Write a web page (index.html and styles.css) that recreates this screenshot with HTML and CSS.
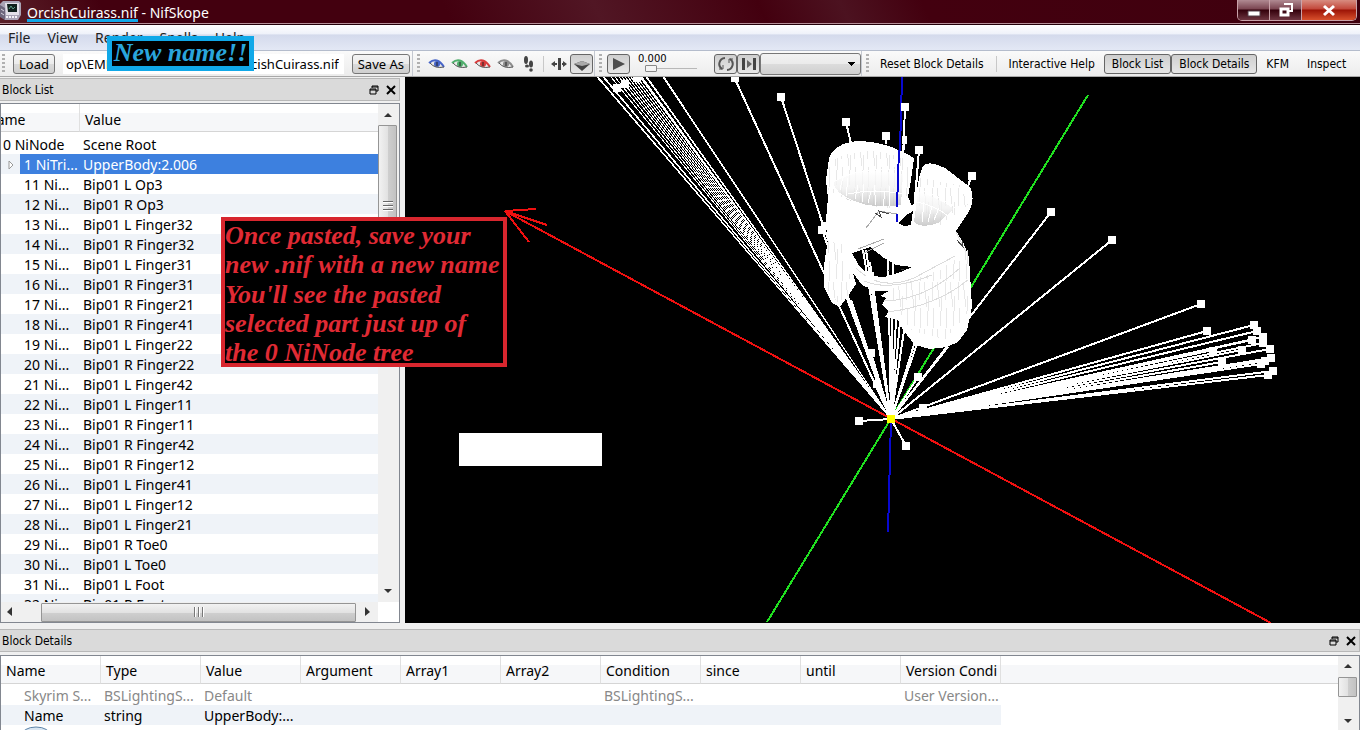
FILE: index.html
```html
<!DOCTYPE html>
<html lang="en">
<head>
    <meta charset="UTF-8">
    <title>OrcishCuirass.nif - NifSkope</title>
    <link rel="stylesheet" href="styles.css">
</head>
<body>
<div class="app">
    <!-- Title bar -->
    <header class="titlebar">
        <svg class="app-icon" width="22" height="22" viewBox="0 0 22 22">
            <path d="M0 4L3 1h16l2 2v12l-3 5H5l-5-4z" fill="#a9a3b5"/>
            <path d="M0 5l5 3v12l-5-3z" fill="#6d667c"/>
            <path d="M5 3h14v12H6z" fill="#e3e0e8"/>
            <path d="M7 4h10v8H8z" fill="#10201c"/>
            <path d="M9 9l2-3 2 3 2-2" stroke="#5fa08a" fill="none"/>
            <path d="M6 17h12" stroke="#f5f3f8" stroke-width="2" stroke-dasharray="2 1"/>
            <path d="M1 9l3 2M1 13l3 2" stroke="#d8d4e0"/>
        </svg>
        <h1 class="title"><span class="file-name">OrcishCuirass.nif</span> - NifSkope</h1>
        <div class="caption-buttons">
            <button class="caption" aria-label="Minimize">
                <svg width="14" height="14"><path d="M1 8h12v5H1z" fill="#fff" stroke="#54404a"/></svg>
            </button>
            <button class="caption" aria-label="Restore">
                <svg width="16" height="16"><path d="M6 2h8v7h-3" fill="none" stroke="#fff" stroke-width="2"/><path d="M3 7h7v6H3z" fill="none" stroke="#fff" stroke-width="3"/></svg>
            </button>
            <button class="caption close" aria-label="Close">
                <svg width="14" height="14"><path d="M2 3l10 9M12 3L2 12" stroke="#fff" stroke-width="3"/></svg>
            </button>
        </div>
    </header>

    <nav class="menubar">
        <a href="#">File</a>
        <a href="#">View</a>
        <a href="#">Render</a>
        <a href="#">Spells</a>
        <a href="#">Help</a>
    </nav>

    <!-- Toolbars -->
    <div class="toolbars">
        <div class="toolbar load-bar">
            <span class="grip"></span>
            <button class="push">Load</button>
            <input class="path" type="text" aria-label="File path" value="op\EMPTY FOLDER\armour\OrcishCuirass.nif">
            <button class="push">Save As</button>
        </div>
        <div class="toolbar view-bar">
            <span class="grip"></span>
            <button class="tool eye-blue" aria-label="Top view"><svg width="18" height="12"><use href="#eye"/></svg></button>
            <button class="tool eye-green" aria-label="Front view"><svg width="18" height="12"><use href="#eye"/></svg></button>
            <button class="tool eye-red" aria-label="Side view"><svg width="18" height="12"><use href="#eye"/></svg></button>
            <button class="tool eye-gray" aria-label="User view"><svg width="18" height="12"><use href="#eye"/></svg></button>
            <button class="tool" aria-label="Walk">
                <svg width="14" height="16" fill="#444"><ellipse cx="4" cy="4" rx="2" ry="4"/><ellipse cx="5" cy="10" rx="2" ry="1.6"/><ellipse cx="9" cy="8" rx="2" ry="3.5"/><ellipse cx="9" cy="14" rx="1.8" ry="1.8"/></svg>
            </button>
            <span class="separator"></span>
            <button class="tool flip" aria-label="Flip">
                <svg width="16" height="14"><path d="M7 1h3v12H7z" fill="#444"/><path d="M0 7l4-3v2h2v2H4v2zM16 7l-4-3v2h-1v2h1v2z" fill="#444"/></svg>
            </button>
            <button class="tool pressed" aria-label="Perspective">
                <svg width="16" height="14"><path d="M0 7l8-3 8 3-8 7z" fill="#444"/><path d="M0 7l8-3 8 3-8 2z" fill="#aaa"/></svg>
            </button>
        </div>
        <div class="toolbar anim-bar">
            <span class="grip"></span>
            <button class="tool pressed" aria-label="Play">
                <svg width="14" height="14"><path d="M1 1l12 6-12 6z" fill="#4d4d4d"/></svg>
            </button>
            <label class="time">0.000<input type="range" min="0" max="100" value="0"></label>
            <button class="tool pressed loop" aria-label="Loop">
                <svg width="16" height="16" fill="none" stroke="#555" stroke-width="2"><path d="M7 2a6 6 0 0 0-3 11M9 14a6 6 0 0 0 3-11"/><path d="M1 13h4v-4M15 3h-4v4" stroke-width="1"/></svg>
            </button>
            <button class="tool pressed" aria-label="Switch animation">
                <svg width="16" height="14"><path d="M1 1h3v12H1zM12 1h3v12h-3z" fill="#444"/><path d="M6 3l5 4-5 4z" fill="#666"/></svg>
            </button>
            <select class="combo" aria-label="Animation group"><option></option></select>
        </div>
        <div class="toolbar dock-bar">
            <span class="grip"></span>
            <button class="text-tool">Reset Block Details</button>
            <span class="separator"></span>
            <button class="text-tool">Interactive Help</button>
            <button class="text-tool pressed">Block List</button>
            <button class="text-tool pressed">Block Details</button>
            <button class="text-tool">KFM</button>
            <button class="text-tool">Inspect</button>
        </div>
    </div>

    <main class="workspace">
        <!-- Block list -->
        <section class="dock">
            <div class="dock-title">
                <h2>Block List</h2>
                <button aria-label="Float"><svg width="10" height="10"><use href="#float"/></svg></button>
                <button aria-label="Close"><svg width="10" height="10"><use href="#cross"/></svg></button>
            </div>
            <div class="tree-box">
                <div class="tree-main">
                    <div class="tree-scroll">
                        <table class="tree block-tree">
                            <thead><tr><th>Name</th><th>Value</th></tr></thead>
                            <tbody>
                                <tr><td class="root">0 NiNode</td><td>Scene Root</td></tr>
                                <tr class="selected"><td><svg class="expander" width="7" height="10"><path d="M1 1l4 4-4 4z" fill="#fff" stroke="#999"/></svg><span class="cell">1 NiTri...</span></td><td>UpperBody:2.006</td></tr>
                                <tr><td>11 Ni...</td><td>Bip01 L Op3</td></tr>
                                <tr><td>12 Ni...</td><td>Bip01 R Op3</td></tr>
                                <tr><td>13 Ni...</td><td>Bip01 L Finger32</td></tr>
                                <tr><td>14 Ni...</td><td>Bip01 R Finger32</td></tr>
                                <tr><td>15 Ni...</td><td>Bip01 L Finger31</td></tr>
                                <tr><td>16 Ni...</td><td>Bip01 R Finger31</td></tr>
                                <tr><td>17 Ni...</td><td>Bip01 R Finger21</td></tr>
                                <tr><td>18 Ni...</td><td>Bip01 R Finger41</td></tr>
                                <tr><td>19 Ni...</td><td>Bip01 L Finger22</td></tr>
                                <tr><td>20 Ni...</td><td>Bip01 R Finger22</td></tr>
                                <tr><td>21 Ni...</td><td>Bip01 L Finger42</td></tr>
                                <tr><td>22 Ni...</td><td>Bip01 L Finger11</td></tr>
                                <tr><td>23 Ni...</td><td>Bip01 R Finger11</td></tr>
                                <tr><td>24 Ni...</td><td>Bip01 R Finger42</td></tr>
                                <tr><td>25 Ni...</td><td>Bip01 R Finger12</td></tr>
                                <tr><td>26 Ni...</td><td>Bip01 L Finger41</td></tr>
                                <tr><td>27 Ni...</td><td>Bip01 L Finger12</td></tr>
                                <tr><td>28 Ni...</td><td>Bip01 L Finger21</td></tr>
                                <tr><td>29 Ni...</td><td>Bip01 R Toe0</td></tr>
                                <tr><td>30 Ni...</td><td>Bip01 L Toe0</td></tr>
                                <tr><td>31 Ni...</td><td>Bip01 L Foot</td></tr>
                                <tr><td>32 Ni...</td><td>Bip01 R Foot</td></tr>
                            </tbody>
                        </table>
                    </div>
                    <div class="vscroll">
                        <svg width="10" height="6"><use href="#up"/></svg>
                        <div class="thumb list-thumb"><span class="ridges"></span></div>
                        <svg width="10" height="6"><use href="#down"/></svg>
                    </div>
                </div>
                <div class="hscroll">
                    <svg width="6" height="10"><path d="M5 0v9L0 5z" fill="#333"/></svg>
                    <div class="thumb"><span class="ridges"></span></div>
                    <svg width="6" height="10"><path d="M1 0v9l5-4z" fill="#333"/></svg>
                </div>
            </div>
        </section>

        <!-- 3D view -->
        <section class="viewport">
            <svg class="scene" viewBox="405 77 955 546" preserveAspectRatio="xMinYMin slice">
                <defs>
                    <linearGradient id="cuff" x1="0" y1="0" x2="0" y2="1">
                        <stop offset="0" stop-color="#fff"/><stop offset="0.5" stop-color="#f0f0f0"/><stop offset="1" stop-color="#bcbcbc"/>
                    </linearGradient>
                    <pattern id="mesh" width="13" height="47" patternUnits="userSpaceOnUse">
                        <path d="M1 0l3 25M6 14l-2 30M9 0l1 18M11 26l-1 20" stroke="#e8e8e8" fill="none"/>
                    </pattern>
                </defs>
                <!-- axes -->
                <path class="axis green" d="M1088 95L767 622"/>
                <path class="axis red" d="M505 211L1271 623M505 211l31-2M505 211l24 31M505 211l42 14"/>
                <path class="axis blue" d="M902 77L898 222M891 419L888 532"/>
                <!-- bones -->
                <path class="bone fan" d="M891 419L597 77M891 419L598 77M891 419L603 77M891 419L604 77M891 419L611 77M891 419L615 77M891 419L619 77M891 419L622 77M891 419L625 77M891 419L628 77M891 419L631 77M891 419L634 77M891 419L637 77M891 419L640 77M891 419L641 77M891 419L642 77M891 419L646 77M891 419L647 77M891 419L663 77M891 419L664 77"/>
                <path class="bone" d="M891 419L735 79M891 419L824 228L781 97M891 419L822 230M852 148L846 122M886 144V136M901 210L905 107M902 180L904 140M911 255L919 150M914 210L919 150M968 187L971 176M891 419L863 250M891 419L866 250M891 419L870 262M891 419L888 250M891 419L893 255M891 419L897 300M891 419L902 300M891 419L907 310M891 419L917 335M891 419L920 335M891 419L848 300M891 419L851 300M891 419L871 353M891 419L877 383M891 419L918 377M891 419L948 347M891 419L859 421M891 419L906 446"/>
                <path class="bone" d="M891 419L1051 212M891 419L1112 240M891 419L923 407L1201 304M891 419L1207 331M891 419L1254 325M891 419L1257 331M891 419L1252 340M891 419L1263 337M891 419L1263 343M891 419L1270 349M891 419L1213 350M891 419L1242 350M891 419L1222 362M891 419L1271 358M891 419L1265 361M891 419L1261 364M891 419L1273 371M891 419L1268 375"/>
                <!-- cuirass mesh -->
                <path id="body" fill="#fff" fill-rule="evenodd" d="M829 158C834 145 848 141 862 141C882 142 900 149 914 158L911 180L908 197L912 206L915 202L919 178L923 166C927 161 936 164 945 168L970 187Q976 200 968 213L956 231L963 242L969 257L972 307L967 330L958 342L947 347L930 349L915 345L903 330L898 320L885 317L889 311L882 305L886 298L880 296L889 291L876 291L862 285L853 273L856 284L850 293L840 307L832 303L824 287L824 265L828 240L826 220L828 198L826 180zM852 253L858 264Q868 277 884 277L901 272L912 267L896 265L884 258L870 247zM898 223L905 216L913 211L911 225L904 226z"/>
                <path fill="url(#mesh)" d="M829 162Q870 140 910 162L908 195L890 208Q850 205 828 190zM920 178L960 185L968 205L940 225L915 215zM826 240L845 245L852 290L840 305L826 288zM888 290L940 270L968 250L970 310L945 340L910 330z"/>
                <path fill="url(#cuff)" opacity="0.75" d="M833 182Q860 166 903 174L901 205Q872 209 848 200Q836 192 833 182z"/>
                <path fill="url(#cuff)" opacity="0.75" d="M918 192Q936 196 954 209L938 223Q922 229 914 222z"/>
                <g fill="none" stroke="#dcdcdc">
                    <path d="M830 184Q862 164 904 171M848 194Q876 188 902 194M833 188Q850 204 880 208M920 190Q944 198 958 210M917 202Q936 206 948 216" stroke="#fff"/>
                    <path d="M866 228L879 211L897 214M858 249L884 239M862 254L884 243" stroke="#aaa"/>
                    <path d="M856 268Q880 292 914 278L955 256M864 281Q890 292 932 275M884 301Q925 300 960 268M888 312Q936 306 968 280M956 232L966 252"/>
                    <path d="M855 199l3-14M862 202l2-18M868 203l3-12M876 205l-2-20M883 206l2-14M890 206l-1-20M896 205l2-12M840 190l3-14M846 196l2-18M922 222l2-20M928 222l4-16M934 220l5-12" stroke="#fff"/>
                </g>
                <path d="M875 213l6 4-2-6 10 3M957 240l6 7-1-6M888 270h2M901 270l3-1" stroke="#444" fill="none"/>
                <path class="axis blue" d="M899 150L897 207M897 214V222"/>
                <!-- joints -->
                <path class="joint" d="M617 88h0M625 84h0M637 78h0M735 78h0M781 97h0M846 122h0M886 136h0M905 107h0M919 150h0M972 176h0M822 230h0M825 226h0M871 353h0M877 384h0M918 377h0M923 408h0M859 421h0M906 446h0M1051 212h0M1112 240h0M1201 304h0M1207 331h0M1254 325h0M1257 331h0M1252 340h0M1263 337h0M1263 343h0M1270 349h0M1213 351h0M1242 350h0M1222 362h0M1271 358h0M1265 361h0M1261 364h0M1273 371h0M1268 375h0"/>
                <path d="M902 136h5v8h-5zM866 272h8v8h-8z" fill="#fff"/>
                <path class="joint origin" d="M891 419h0"/>
                <path d="M459 433h143v33H459z" fill="#fff"/>
            </svg>
        </section>
    </main>

    <!-- Block details -->
    <section class="details">
        <div class="dock-title">
            <h2>Block Details</h2>
            <button aria-label="Float"><svg width="10" height="10"><use href="#float"/></svg></button>
            <button aria-label="Close"><svg width="10" height="10"><use href="#cross"/></svg></button>
        </div>
        <div class="details-box">
            <div class="details-scroll">
                <table class="tree details-tree">
                    <thead>
                        <tr><th>Name</th><th>Type</th><th>Value</th><th>Argument</th><th>Array1</th><th>Array2</th><th>Condition</th><th>since</th><th>until</th><th>Version Condi</th></tr>
                    </thead>
                    <tbody>
                        <tr class="disabled"><td>Skyrim S...</td><td>BSLightingS...</td><td>Default</td><td></td><td></td><td></td><td>BSLightingS...</td><td></td><td></td><td>User Version...</td></tr>
                        <tr><td>Name</td><td>string</td><td>UpperBody:...</td><td></td><td></td><td></td><td></td><td></td><td></td><td></td></tr>
                        <tr><td><svg class="link-icon" width="32" height="20"><ellipse cx="16" cy="10" rx="15" ry="9" fill="#d9e6f2" stroke="#5b83a8"/></svg></td><td></td><td></td><td></td><td></td><td></td><td></td><td></td><td></td><td></td></tr>
                    </tbody>
                </table>
            </div>
            <div class="vscroll">
                <svg width="10" height="6"><use href="#up"/></svg>
                <div class="thumb details-thumb"></div>
                <svg width="10" height="6"><use href="#down"/></svg>
            </div>
        </div>
    </section>

    <!-- Notes over the window -->
    <p class="note name-note">New name!!</p>
    <div class="note paste-note">
        <p>Once pasted, save your<br>new .nif with a new name</p>
        <p>You'll see the pasted<br>selected part just up of<br>the 0 NiNode tree</p>
    </div>
</div>

<svg class="symbols" width="0" height="0">
    <symbol id="eye" viewBox="0 0 18 12">
        <path d="M2 5Q9-1 16 9Q7 12 2 5z" fill="#e8e8e8"/>
        <circle cx="9" cy="6" r="3" fill="currentColor"/>
        <path d="M1 5Q9-2 16 9" fill="none" stroke="currentColor" stroke-width="2"/>
        <path d="M2 5Q7 11 16 9" fill="none" stroke="#555"/>
        <path d="M9 4v4" stroke="#222"/>
    </symbol>
    <symbol id="float" viewBox="0 0 10 10"><path d="M3 3V1h6v5H7M1 4h6v5H1zM1 5h6M3 2h6" fill="none" stroke="#000"/></symbol>
    <symbol id="cross" viewBox="0 0 10 10"><path d="M1 1l8 8M9 1L1 9" stroke="#000" stroke-width="2"/></symbol>
    <symbol id="up" viewBox="0 0 10 6"><path d="M1 5l4-4 4 4z" fill="#333"/></symbol>
    <symbol id="down" viewBox="0 0 10 6"><path d="M1 1l4 4 4-4z" fill="#333"/></symbol>
</svg>
</body>
</html>
```
FILE: styles.css
```css
* {
    box-sizing: border-box;
}

body {
    margin: 0;
    font-family: "Noto Sans", "Open Sans", sans-serif;
    font-size: 14px;
    color: #000;
    background-color: #f0f0f0;
}

button,
input,
select {
    font-family: "Noto Sans", "DejaVu Sans", sans-serif;
    font-size: 13px;
    color: #000;
    margin: 0;
}

button {
    padding: 0;
    border: none;
    background: none;
}

button svg {
    display: block;
}

.app {
    position: relative;
    display: flex;
    flex-direction: column;
    height: 100vh;
    overflow: hidden;
}

.symbols {
    position: absolute;
}

/* Title bar */
.titlebar {
    display: flex;
    flex: none;
    height: 25px;
    gap: 5px;
    border-bottom: 1px solid #24000a;
    box-shadow: inset 0 -1px #b58f98;
    background: linear-gradient(65deg, #5a2029 0%, #43000f 8%, #43000f 33%, #511624 44%, #43000f 56%, #4c1220 62%, #43000f 68%, #3f000e 100%);
}

.title {
    flex: 1;
    margin: 0;
    color: #fff;
    font-size: 14px;
    font-weight: normal;
    line-height: 25px;
}

.file-name {
    display: inline-block;
    height: 22px;
    border-bottom: 3px solid #10a8e8;
}

.caption-buttons {
    display: flex;
    height: 21px;
    margin-right: 3px;
    border: 1px solid #c9a3aa;
    border-top: none;
    border-radius: 0 0 5px 5px;
    overflow: hidden;
}

.caption {
    display: flex;
    justify-content: center;
    align-items: center;
    width: 32px;
    border-right: 1px solid #c9a3aa;
    background: linear-gradient(#b08a92, #7a4450 45%, #33000b 50%, #6d3540);
}

.close {
    width: 54px;
    border-right: none;
    background: linear-gradient(#d88c80, #c2473a 45%, #9c1406 50%, #d8502c);
}

/* Menu */
.menubar {
    display: flex;
    flex: none;
    gap: 17px;
    height: 26px;
    padding-left: 8px;
    line-height: 26px;
    border-bottom: 1px solid #b4bccc;
    background: linear-gradient(#fff, #eff2fa 35%, #d4daec 40%, #e3e8f5);
}

.menubar a {
    color: #222;
    text-decoration: none;
}

/* Toolbars */
.toolbars {
    display: flex;
    flex: none;
    height: 26px;
    border-bottom: 1px solid #a8a8a8;
    background: linear-gradient(#fafafa, #ececec);
}

.toolbar {
    display: flex;
    align-items: center;
    padding-left: 4px;
    border-right: 1px solid #c4c8d0;
}

.load-bar {
    width: 413px;
    gap: 8px;
    padding-left: 2px;
    padding-right: 2px;
}

.view-bar {
    width: 182px;
}

.anim-bar {
    width: 267px;
}

.dock-bar {
    flex: 1;
    border-right: none;
}

.grip {
    width: 3px;
    height: 19px;
    background: repeating-linear-gradient(#b0b0b0 0 2px, transparent 2px 4px);
}

.push {
    height: 20px;
    padding: 0 5px;
    white-space: nowrap;
    border: 1px solid #777;
    border-radius: 3px;
    background: linear-gradient(#f4f4f4, #ebebeb 50%, #dadada 51%, #cfcfcf);
}

.path {
    flex: 1;
    min-width: 0;
    height: 20px;
    padding: 0 5px 0 0;
    text-align: right;
    border: none;
    background-color: #fff;
}

.tool {
    display: flex;
    justify-content: center;
    align-items: center;
    width: 23px;
    height: 20px;
}

.eye-blue {
    color: #4664c8;
}

.eye-green {
    color: #4fae6c;
}

.eye-red {
    color: #d83a3a;
}

.eye-gray {
    color: #8c8c8c;
}

.view-bar .grip,
.anim-bar .grip {
    margin-right: 5px;
}

.dock-bar .grip {
    margin-right: 2px;
}

.pressed {
    border: 1px solid #666;
    border-radius: 3px;
    background: linear-gradient(#cfcfcf, #e6e6e6);
}

.separator {
    width: 1px;
    height: 16px;
    margin: 0 3px;
    background-color: #c8c8c8;
}

.time {
    display: flex;
    flex-direction: column;
    width: 68px;
    margin: 0 8px;
    font: 10px/10px "DejaVu Sans", sans-serif;
}

.time input {
    width: 52px;
    height: 9px;
    margin-left: 7px;
    appearance: none;
    background: linear-gradient(transparent 4px, #b8b8b8 4px 5px, transparent 5px);
}

.time input::-webkit-slider-thumb {
    appearance: none;
    width: 12px;
    height: 7px;
    border: 1px solid #888;
    border-radius: 1px;
    background-color: #f4f4f4;
}

.combo {
    flex: 1;
    height: 22px;
    padding: 0;
    appearance: none;
    border: 1px solid #777;
    border-radius: 3px;
    background: linear-gradient(135deg, #000 50%, transparent 50%) right 4px top 8px / 4px 4px no-repeat, linear-gradient(225deg, #000 50%, transparent 50%) right 8px top 8px / 4px 4px no-repeat, linear-gradient(#f2f2f2, #ebebeb 50%, #dcdcdc 51%, #cfcfcf);
}

.text-tool {
    height: 20px;
    padding: 0 9px;
    font-family: "DejaVu Sans Condensed", "DejaVu Sans", sans-serif;
    font-size: 12px;
    white-space: nowrap;
}

.dock-bar .pressed {
    padding: 0 7px;
}

/* Docks */
.workspace {
    display: flex;
    flex: 1;
    min-height: 0;
}

.dock {
    display: flex;
    flex: none;
    flex-direction: column;
    gap: 2px;
    width: 400px;
    padding-top: 1px;
}

.dock-title {
    display: flex;
    flex: none;
    align-items: center;
    gap: 7px;
    height: 23px;
    padding: 0 3px 0 2px;
    border: 1px solid #b8b8b8;
    border-left: none;
    background-color: #dadada;
}

.dock-title h2 {
    flex: 1;
    margin: 0;
    font: 12px "DejaVu Sans Condensed", "DejaVu Sans", sans-serif;
}

.tree-box {
    display: flex;
    flex: 1;
    flex-direction: column;
    min-height: 0;
    border: 1px solid #828790;
    background-color: #fff;
}

.tree-main {
    display: flex;
    flex: 1;
    min-height: 0;
}

.tree-scroll {
    flex: 1;
    overflow: hidden;
    background: linear-gradient(#fff 9px, #f6f7f9 9px 27px, #d5d5d5 27px 28px, #fff 28px);
}

.tree {
    table-layout: fixed;
    border-collapse: separate;
    border-spacing: 0;
    line-height: 19px;
}

.tree th {
    height: 28px;
    padding: 3px 5px 0;
    text-align: left;
    font-weight: normal;
    white-space: nowrap;
    border-right: 1px solid #e0e0e0;
    border-bottom: 1px solid #d5d5d5;
    background: linear-gradient(#fff 9px, #f6f7f9 9px);
}

.tree td {
    height: 20px;
    padding: 1px 3px 0;
    white-space: nowrap;
    overflow: hidden;
}

.tree tbody tr:nth-child(even) {
    background-color: #eff3f8;
}

.tree td:first-child {
    padding-left: 23px;
}

/* the list is scrolled a little to the right */
.block-tree {
    width: calc(100% + 20px);
    margin-left: -20px;
}

.block-tree tbody::before {
    content: "";
    display: block;
    height: 2px;
}

.block-tree th:first-child {
    width: 99px;
}

.block-tree th:last-child {
    border-right: none;
}

.block-tree td:first-child {
    padding-left: 43px;
    padding-right: 0;
}

.block-tree td.root {
    padding-left: 22px;
}

.block-tree .selected td {
    color: #fff;
    background-color: #3d80df;
}

.block-tree .selected td:first-child {
    padding-left: 27px;
    background: linear-gradient(90deg, #eff3f8 39px, #3d80df 39px);
}

.expander {
    margin-right: 9px;
}

/* Scroll bars */
.vscroll {
    display: flex;
    flex: none;
    flex-direction: column;
    align-items: center;
    width: 21px;
    padding: 8px 2px 8px 0;
    background-color: #f0f0f0;
}

.hscroll {
    display: flex;
    flex: none;
    align-items: center;
    gap: 28px;
    height: 20px;
    margin-right: 21px;
    padding: 0 8px 0 6px;
    background-color: #f0f0f0;
}

.hscroll svg:last-child {
    margin-left: -20px;
}

.thumb {
    display: flex;
    justify-content: center;
    align-items: center;
    border: 1px solid #959595;
    border-radius: 1px;
}

.hscroll .thumb {
    flex: 1;
    height: 19px;
    background: linear-gradient(#f2f2f2, #e2e2e2 50%, #cfcfcf 51%, #c2c2c2);
}

.vscroll .thumb {
    width: 19px;
    background: linear-gradient(90deg, #f2f2f2, #e2e2e2 50%, #cfcfcf 51%, #c2c2c2);
}

.list-thumb {
    height: 162px;
    margin: 7px 0 auto;
}

.details-thumb {
    height: 20px;
    margin: 8px 0 auto;
}

.ridges {
    width: 10px;
    height: 10px;
    background: repeating-linear-gradient(90deg, #777 0 1px, #fff 1px 2px, transparent 2px 4px);
}

.list-thumb .ridges {
    background: repeating-linear-gradient(#666 0 1px, #fff 1px 2px, transparent 2px 4px);
}

/* 3D view */
.viewport {
    flex: 1;
    min-width: 0;
    margin-left: 5px;
    background-color: #000;
}

.scene {
    display: block;
    width: 100%;
    height: 100%;
    shape-rendering: crispEdges;
}

.axis {
    fill: none;
    stroke-width: 2;
}

.red {
    stroke: #f01010;
}

.green {
    stroke: #20e020;
}

.blue {
    stroke: #0808d0;
}

.bone {
    fill: none;
    stroke: #fff;
    stroke-width: 2;
}

.fan {
    stroke-width: 1;
}

.joint {
    stroke: #fff;
    stroke-width: 8;
    stroke-linecap: square;
}

.origin {
    stroke: #ff0;
}

/* Block details */
.details {
    display: flex;
    flex: none;
    flex-direction: column;
    gap: 3px;
    height: 107px;
    padding-top: 6px;
}

.details-box {
    display: flex;
    flex: 1;
    min-height: 0;
    border: 1px solid #828790;
    border-bottom: none;
    background-color: #fff;
}

.details-scroll {
    flex: 1;
    overflow: hidden;
    background: linear-gradient(#fff 9px, #f6f7f9 9px 27px, #d5d5d5 27px 28px, #fff 28px);
}

.details-tree {
    width: 1000px;
}

.details-tree th {
    padding-top: 1px;
}

.details-tree tbody::before {
    content: "";
    display: block;
    height: 1px;
}

.disabled {
    color: #888;
}

.link-icon {
    display: block;
    margin-left: -4px;
}

.details-box .vscroll {
    padding-top: 7px;
    padding-bottom: 6px;
}

/* Notes */
.note {
    position: absolute;
    margin: 0;
    font-family: "Liberation Serif", serif;
    font-size: 26px;
    font-weight: bold;
    font-style: italic;
    white-space: nowrap;
    background-color: #000;
}

.name-note {
    left: 107px;
    top: 36px;
    width: 147px;
    height: 35px;
    line-height: 24px;
    text-align: center;
    color: #2aa5dc;
    border: 5px solid #10a8e8;
}

.paste-note {
    left: 221px;
    top: 217px;
    width: 286px;
    height: 150px;
    line-height: 29px;
    color: #e02a34;
    border: 4px solid #d8262e;
}

.paste-note p {
    margin: 0 0 1px;
}
```
